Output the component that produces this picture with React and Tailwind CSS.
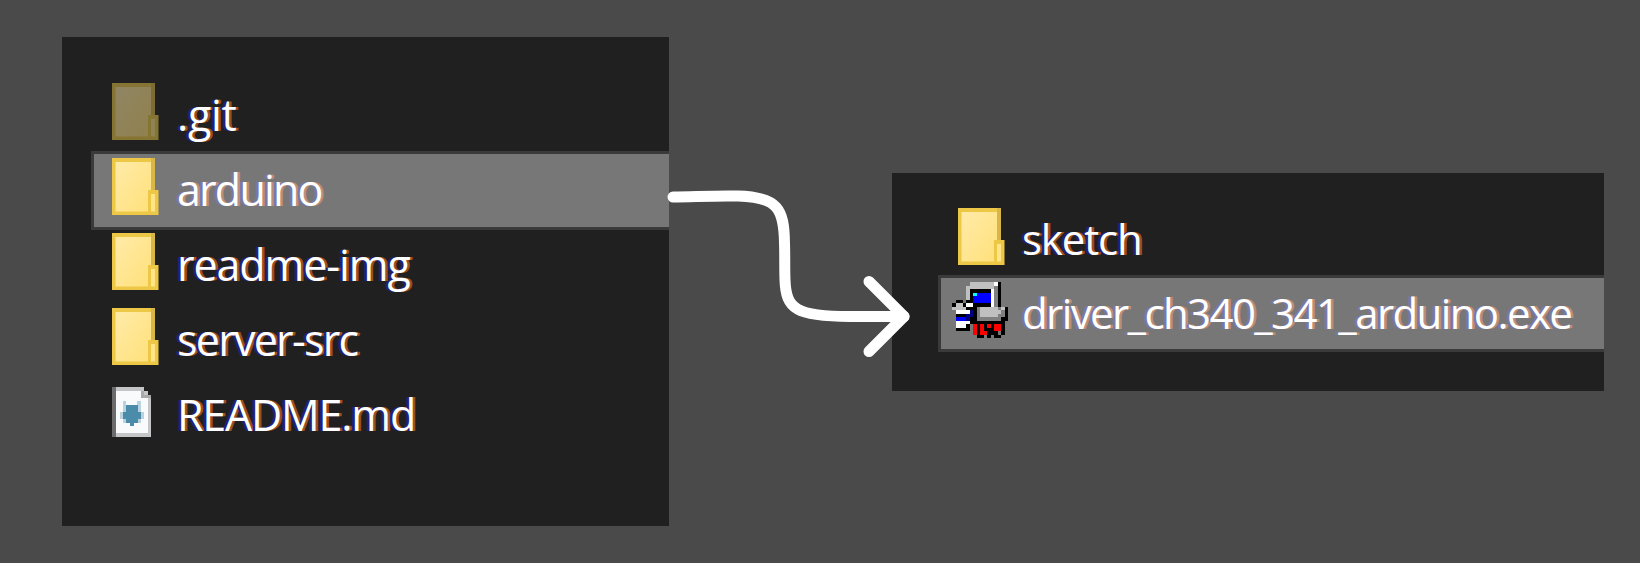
import React from "react";

const PALETTE = { K: "#000000", W: "#ffffff", C: "#c0c0c0", D: "#808080", B: "#0000ff", N: "#000080", A: "#00ffff", R: "#ff0000" };

const SETUP_PIXELS = [
  ".....CCCCCCCWK..",
  "....CCCCCCCCDK..",
  "....CKKKKKKWDK..",
  "....CKABBBBWDK..",
  "....CKBBBBBWDK..",
  ".KK.KKBBBBBWDK..",
  "KCCKWWKKKKKWDK..",
  "CCCCKKKDCCCCCDCK",
  ".WWWWNKDCCCCCCDK",
  ".KKKNNKDCCCCCDDK",
  ".BBBNKKDDDDDDDKK",
  ".WWWWKKKKKKKKKK.",
  ".WWWK.RKRKRKRRK.",
  ".KKKK.RKRKKKRRK.",
  "......RKRRKKK.K.",
  ".......KK.K.KK..",
];

function SetupIcon() {
  return (
    <svg className="h-14 w-14 shrink-0" viewBox="0 0 16 16" shapeRendering="crispEdges">
      {SETUP_PIXELS.flatMap((row, y) =>
        [...row].map((c, x) => c !== "." && <rect key={`${x}-${y}`} x={x} y={y} width="1" height="1" fill={PALETTE[c]} />)
      )}
    </svg>
  );
}

function FolderIcon({ faded }) {
  return (
    <svg className="h-[57px] w-[47px] shrink-0" viewBox="0 0 47 57">
      <defs>
        <linearGradient id="folder" x1="0" y1="0" x2="1" y2="1">
          <stop offset="0" stopColor="#ffeba8" />
          <stop offset="1" stopColor="#ffe07a" />
        </linearGradient>
      </defs>
      <g opacity={faded ? 0.5 : 1}>
        <path d="M0 0H43V32H46.500V57H0Z" fill="#ecc846" />
        <path d="M39 0H43V32H39Z" fill="#d8b748" />
        <path d="M3.500 4H39V32H36V53.500H3.500Z" fill="url(#folder)" />
        <path d="M39 36H43V53.500H39Z" fill="#ffe587" />
      </g>
    </svg>
  );
}

function FileIcon() {
  return (
    <svg className="h-[50px] w-[39px] shrink-0" viewBox="0 0 39 50" shapeRendering="crispEdges">
      <path d="M0 0H32V4H36V8H39V50H0Z" fill="#c4c5c6" />
      <path d="M0 0H4V50H0Z" fill="#6b6b6b" />
      <path d="M4 4H29V11H36V46H4Z" fill="#f9fafc" />
      <path d="M29 4H32V8H39V11H29Z" fill="#a9a9a9" />
      <path d="M11 14H14V18H25V14H29V25H32V32H29V36H22V39H18V36H11V32H8V25H11Z" fill="#b9d2dd" />
      <path d="M14 18H26V25H29V32H26V36H22V39H18V36H14V32H11V25H14Z" fill="#4a8ca9" />
    </svg>
  );
}

function Label({ children, className }) {
  return <span className={`whitespace-pre leading-[58px] text-white ${className}`}>{children}</span>;
}

const fringe = "[text-shadow:-2.5px_0_#20207a,2.5px_0_#9a5020]";
const softFringe = "[text-shadow:-2.5px_0_#7878a8,2.5px_0_#bc8e7a]";

export default function App() {
  return (
    <main className="relative flex h-[563px] w-[1640px] items-start overflow-hidden bg-[#4a4a4a] font-['Open_Sans','Noto_Sans',sans-serif]">
      <section className="mt-[37px] ml-[62px] flex h-[489px] w-[607px] flex-col bg-[#202020] pt-[39px] pl-[29px] text-[43px]">
        <div className="flex h-[75px] pt-[7px] pl-[21px]">
          <FolderIcon faded />
          <Label className={`ml-[18px] pt-[3px] tracking-[-0.3px] ${fringe}`}>.git</Label>
        </div>
        <div className="flex h-[79px] border-y-[3px] border-l-[3px] border-[#3a3a3a] bg-[#777777] pt-1 pl-[18px]">
          <FolderIcon />
          <Label className={`ml-[18px] pt-[3px] tracking-[-1.8px] ${softFringe}`}>arduino</Label>
        </div>
        <div className="flex h-[75px] pt-[3px] pl-[21px]">
          <FolderIcon />
          <Label className={`ml-[18px] pt-[3px] tracking-[-1.1px] ${fringe}`}>readme-img</Label>
        </div>
        <div className="flex h-[75px] pt-[3px] pl-[21px]">
          <FolderIcon />
          <Label className={`ml-[18px] pt-[3px] tracking-[-1.75px] ${fringe}`}>server-src</Label>
        </div>
        <div className="flex h-[75px] items-start pt-[3px] pl-[21px]">
          <div className="pt-1">
            <FileIcon />
          </div>
          <Label className={`ml-[26px] pt-[3px] tracking-[-1.2px] ${fringe}`}>README.md</Label>
        </div>
      </section>

      <section className="mt-[173px] ml-[223px] flex h-[218px] w-[712px] flex-col bg-[#202020] pt-[35px] pl-[46px] text-[42px]">
        <div className="flex h-[67px] pl-[20px]">
          <FolderIcon />
          <Label className={`ml-[17px] pt-[2px] tracking-[-1.15px] ${fringe}`}>sketch</Label>
        </div>
        <div className="flex h-[77px] border-y-[3px] border-l-[3px] border-[#3a3a3a] bg-[#777777] pt-1 pl-[11px]">
          <SetupIcon />
          <Label className={`ml-[14px] pt-[2px] tracking-[-1.6px] ${softFringe}`}>driver_ch340_341_arduino.exe</Label>
        </div>
      </section>

      <svg className="absolute top-0 left-0 h-[563px] w-[1640px]" viewBox="0 0 1640 563" fill="none" stroke="#ffffff" strokeWidth="11" strokeLinecap="round" strokeLinejoin="round">
        <path d="M673 197C700 196.500 716 195.500 738 196C778 197 784 209 784.500 243C785 258 784.500 266 785 280C786 309 796 316.500 850 316.500H904" />
        <path d="M869 281.500L904 316.500L869 351.500" />
      </svg>
    </main>
  );
}
